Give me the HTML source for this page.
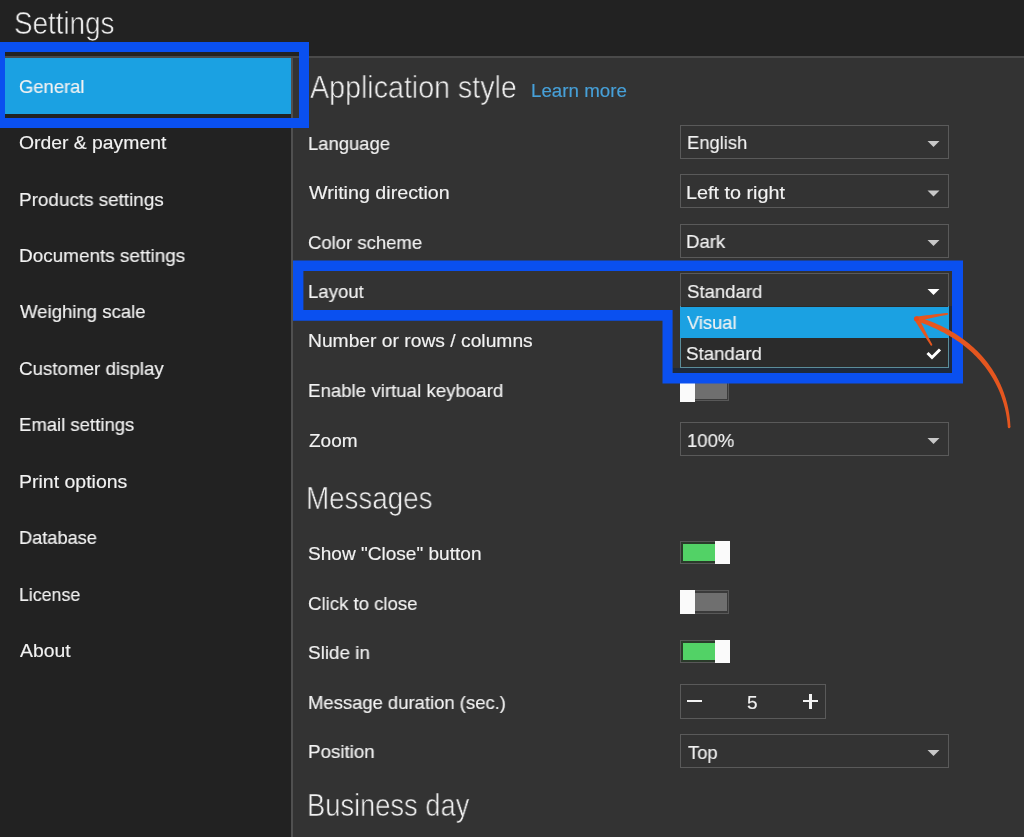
<!DOCTYPE html>
<html><head><meta charset="utf-8"><style>
html,body{margin:0;padding:0;}
body{width:1024px;height:837px;overflow:hidden;position:relative;background:#333333;font-family:"Liberation Sans", sans-serif;}
.a{position:absolute;}
.t{position:absolute;white-space:pre;line-height:1;transform-origin:0 0;font-family:"Liberation Sans", sans-serif;-webkit-text-stroke:0.15px currentColor;will-change:transform;}
</style></head><body>
<div class="a" style="left:0;top:0;width:1024px;height:56px;background:#222222"></div>
<div class="a" style="left:0;top:56px;width:1024px;height:2px;background:#4a4a4a"></div>
<div class="a" style="left:0;top:58px;width:291px;height:779px;background:#222222"></div>
<div class="a" style="left:291px;top:58px;width:2px;height:779px;background:#505050"></div>
<div class="a" style="left:0;top:58px;width:291px;height:56px;background:#1ba1e2"></div>
<!-- dropdowns -->
<div class="a" style="left:680px;top:125px;width:267px;height:32px;border:1px solid #5a5a5a"></div>
<div class="a" style="left:680px;top:174px;width:267px;height:32px;border:1px solid #5a5a5a"></div>
<div class="a" style="left:680px;top:224px;width:267px;height:32px;border:1px solid #5a5a5a"></div>
<div class="a" style="left:680px;top:273px;width:267px;height:33px;border:1px solid #5a5a5a;border-bottom:none"></div>
<div class="a" style="left:680px;top:422px;width:267px;height:32px;border:1px solid #5a5a5a"></div>
<div class="a" style="left:680px;top:734px;width:267px;height:32px;border:1px solid #5a5a5a"></div>
<svg class="a" style="left:0;top:0" width="1024" height="837">
<path d="M927.5 141 L939.5 141 L933.5 147 Z" fill="#c8c8c8"/>
<path d="M927.5 190.5 L939.5 190.5 L933.5 196.5 Z" fill="#c8c8c8"/>
<path d="M927.5 240 L939.5 240 L933.5 246 Z" fill="#c8c8c8"/>
<path d="M927.5 289 L939.5 289 L933.5 295 Z" fill="#ffffff"/>
<path d="M927.5 438 L939.5 438 L933.5 444 Z" fill="#c8c8c8"/>
<path d="M927.5 750 L939.5 750 L933.5 756 Z" fill="#c8c8c8"/>
</svg>
<!-- popup -->
<div class="a" style="left:949px;top:306px;width:3px;height:67px;background:#1e2a3c"></div>
<div class="a" style="left:673px;top:368px;width:279px;height:5px;background:#1e2a3c"></div>
<div class="a" style="left:680px;top:306px;width:269px;height:62px;background:#2b2b2b;border:1px solid #5b8d9a;border-top:none;box-sizing:border-box"></div>
<div class="a" style="left:680px;top:306.5px;width:269px;height:31.5px;background:#1ba1e2"></div>
<svg class="a" style="left:0;top:0" width="1024" height="837">
<path d="M927.5 353 L932 357.5 L940 349.5" stroke="#fff" stroke-width="3" fill="none"/>
</svg>
<!-- toggles -->
<div class="a" style="left:680px;top:378px;width:49px;height:23px;box-sizing:border-box;border:1px solid #585858;background:#3a3a3a"></div>
<div class="a" style="left:695px;top:380.5px;width:32px;height:18.5px;background:#6f6f6f"></div>
<div class="a" style="left:680px;top:378px;width:15px;height:23.5px;background:#fafafa"></div>

<div class="a" style="left:680px;top:540.5px;width:50px;height:23.5px;box-sizing:border-box;border:1px solid #585858;background:#2a3a2a"></div>
<div class="a" style="left:682.5px;top:543.5px;width:33px;height:17.5px;background:#52d266"></div>
<div class="a" style="left:715px;top:540.5px;width:15px;height:23.5px;background:#fafafa"></div>

<div class="a" style="left:680px;top:590.3px;width:49px;height:23.5px;box-sizing:border-box;border:1px solid #585858;background:#3a3a3a"></div>
<div class="a" style="left:695px;top:592.6px;width:32px;height:18.5px;background:#6f6f6f"></div>
<div class="a" style="left:680px;top:590.3px;width:15px;height:23.5px;background:#fafafa"></div>

<div class="a" style="left:680px;top:639.7px;width:50px;height:23.5px;box-sizing:border-box;border:1px solid #585858;background:#2a3a2a"></div>
<div class="a" style="left:682.5px;top:642.7px;width:33px;height:17.5px;background:#52d266"></div>
<div class="a" style="left:715px;top:639.7px;width:15px;height:23.5px;background:#fafafa"></div>
<!-- stepper -->
<div class="a" style="left:680px;top:684px;width:144px;height:32.5px;border:1px solid #5a5a5a"></div>
<div class="a" style="left:687px;top:699.5px;width:15px;height:2.2px;background:#f2f2f2"></div>
<div class="a" style="left:803px;top:700px;width:15px;height:2.3px;background:#f2f2f2"></div>
<div class="a" style="left:809.3px;top:693.5px;width:2.3px;height:15.5px;background:#f2f2f2"></div>

<div class='t' style='left:14.23px;top:8.20px;font-size:31.5px;color:#f0f0f0;transform:scaleX(0.8829);-webkit-text-stroke:0.6px #222;'>Settings</div>
<div class='t' style='left:19.03px;top:76.80px;font-size:19px;color:#f2f2f2;transform:scaleX(0.9692);'>General</div>
<div class='t' style='left:18.98px;top:133.22px;font-size:19px;color:#f2f2f2;transform:scaleX(1.0181);'>Order &amp; payment</div>
<div class='t' style='left:19.01px;top:189.64px;font-size:19px;color:#f2f2f2;transform:scaleX(0.9931);'>Products settings</div>
<div class='t' style='left:19.00px;top:246.06px;font-size:19px;color:#f2f2f2;transform:scaleX(0.9964);'>Documents settings</div>
<div class='t' style='left:20.00px;top:302.48px;font-size:19px;color:#f2f2f2;transform:scaleX(0.9766);'>Weighing scale</div>
<div class='t' style='left:19.01px;top:358.90px;font-size:19px;color:#f2f2f2;transform:scaleX(0.9863);'>Customer display</div>
<div class='t' style='left:19.03px;top:415.32px;font-size:19px;color:#f2f2f2;transform:scaleX(0.9744);'>Email settings</div>
<div class='t' style='left:18.97px;top:471.74px;font-size:19px;color:#f2f2f2;transform:scaleX(1.0260);'>Print options</div>
<div class='t' style='left:19.04px;top:528.16px;font-size:19px;color:#f2f2f2;transform:scaleX(0.9575);'>Database</div>
<div class='t' style='left:19.07px;top:584.58px;font-size:19px;color:#f2f2f2;transform:scaleX(0.9344);'>License</div>
<div class='t' style='left:20.00px;top:641.00px;font-size:19px;color:#f2f2f2;transform:scaleX(1.0200);'>About</div>
<div class='t' style='left:310.00px;top:71.60px;font-size:31px;color:#f0f0f0;transform:scaleX(0.9229);-webkit-text-stroke:0.6px #333;'>Application style</div>
<div class='t' style='left:530.66px;top:82.20px;font-size:18px;color:#47a0d8;transform:scaleX(1.0411);'>Learn more</div>
<div class='t' style='left:308.03px;top:133.60px;font-size:19px;color:#f2f2f2;transform:scaleX(0.9699);'>Language</div>
<div class='t' style='left:309.00px;top:182.80px;font-size:19px;color:#f2f2f2;transform:scaleX(1.0356);'>Writing direction</div>
<div class='t' style='left:308.03px;top:232.50px;font-size:19px;color:#f2f2f2;transform:scaleX(0.9733);'>Color scheme</div>
<div class='t' style='left:308.02px;top:282.00px;font-size:19px;color:#f2f2f2;transform:scaleX(0.9768);'>Layout</div>
<div class='t' style='left:307.99px;top:331.40px;font-size:19px;color:#f2f2f2;transform:scaleX(1.0136);'>Number or rows / columns</div>
<div class='t' style='left:308.02px;top:380.60px;font-size:19px;color:#f2f2f2;transform:scaleX(0.9832);'>Enable virtual keyboard</div>
<div class='t' style='left:309.00px;top:430.60px;font-size:19px;color:#f2f2f2;transform:scaleX(1.0000);'>Zoom</div>
<div class='t' style='left:306.31px;top:483.00px;font-size:31px;color:#f0f0f0;transform:scaleX(0.8956);-webkit-text-stroke:0.6px #333;'>Messages</div>
<div class='t' style='left:308.00px;top:544.20px;font-size:19px;color:#f2f2f2;transform:scaleX(1.0029);'>Show &quot;Close&quot; button</div>
<div class='t' style='left:308.02px;top:593.90px;font-size:19px;color:#f2f2f2;transform:scaleX(0.9791);'>Click to close</div>
<div class='t' style='left:308.01px;top:643.20px;font-size:19px;color:#f2f2f2;transform:scaleX(0.9933);'>Slide in</div>
<div class='t' style='left:308.03px;top:692.90px;font-size:19px;color:#f2f2f2;transform:scaleX(0.9708);'>Message duration (sec.)</div>
<div class='t' style='left:308.01px;top:742.40px;font-size:19px;color:#f2f2f2;transform:scaleX(0.9864);'>Position</div>
<div class='t' style='left:307.36px;top:789.60px;font-size:31px;color:#f0f0f0;transform:scaleX(0.8801);-webkit-text-stroke:0.6px #333;'>Business day</div>
<div class='t' style='left:687.03px;top:133.40px;font-size:19px;color:#f2f2f2;transform:scaleX(0.9667);'>English</div>
<div class='t' style='left:686.36px;top:183.10px;font-size:19px;color:#f2f2f2;transform:scaleX(1.0415);'>Left to right</div>
<div class='t' style='left:686.42px;top:232.30px;font-size:19px;color:#f2f2f2;transform:scaleX(0.9795);'>Dark</div>
<div class='t' style='left:686.72px;top:281.80px;font-size:19px;color:#f2f2f2;transform:scaleX(0.9773);'>Standard</div>
<div class='t' style='left:686.50px;top:313.30px;font-size:19px;color:#f2f2f2;transform:scaleX(0.9640);'>Visual</div>
<div class='t' style='left:685.52px;top:344.30px;font-size:19px;color:#f2f2f2;transform:scaleX(0.9840);'>Standard</div>
<div class='t' style='left:687.03px;top:430.60px;font-size:19px;color:#f2f2f2;transform:scaleX(0.9723);'>100%</div>
<div class='t' style='left:687.60px;top:743.00px;font-size:19px;color:#f2f2f2;transform:scaleX(0.9700);'>Top</div>
<div class='t' style='left:747.00px;top:693.00px;font-size:19px;color:#f2f2f2;transform:scaleX(1.0000);'>5</div>
<div class="a" style="left:-5px;top:42px;width:294px;height:66px;border:10px solid #0a50f0"></div>
<svg class="a" style="left:0;top:0" width="1024" height="837">
<path fill-rule="evenodd" fill="#0a50f0" d="M293 260.5 H963 V383.5 H662.5 V320.7 H293 Z M303.4 271 V310 H672.6 V373 H952 V271 Z"/>
<path d="M1010.40 426.93 L1010.33 425.08 L1010.22 423.20 L1010.08 421.29 L1009.91 419.36 L1009.69 417.41 L1009.44 415.44 L1009.15 413.45 L1008.82 411.44 L1008.45 409.42 L1008.03 407.38 L1007.57 405.33 L1007.07 403.27 L1006.52 401.19 L1005.93 399.11 L1005.29 397.01 L1004.60 394.91 L1003.87 392.80 L1003.08 390.69 L1002.25 388.57 L1001.36 386.45 L1000.43 384.33 L999.44 382.21 L998.39 380.09 L997.29 377.98 L996.14 375.86 L994.93 373.76 L993.66 371.66 L992.33 369.57 L990.94 367.48 L989.49 365.41 L987.97 363.36 L986.39 361.32 L984.75 359.30 L983.04 357.29 L981.27 355.30 L979.43 353.32 L977.53 351.37 L975.56 349.44 L973.52 347.54 L971.42 345.65 L969.24 343.80 L966.99 341.97 L964.67 340.16 L962.28 338.39 L959.82 336.65 L957.28 334.94 L954.67 333.26 L951.97 331.65 L949.19 330.07 L946.33 328.53 L943.40 327.03 L940.39 325.58 L937.31 324.16 L934.14 322.79 L930.89 321.46 L927.56 320.17 L924.15 318.94 L920.66 317.75 L917.11 316.61 L915.69 320.99 L919.19 322.14 L922.59 323.33 L925.89 324.57 L929.12 325.85 L932.26 327.17 L935.33 328.54 L938.31 329.94 L941.21 331.38 L944.03 332.86 L946.78 334.38 L949.45 335.93 L952.04 337.51 L954.58 339.10 L957.05 340.72 L959.44 342.37 L961.76 344.05 L964.01 345.76 L966.19 347.49 L968.31 349.25 L970.36 351.04 L972.34 352.85 L974.26 354.68 L976.11 356.53 L977.90 358.41 L979.63 360.30 L981.29 362.21 L982.90 364.13 L984.44 366.07 L985.93 368.02 L987.36 369.99 L988.74 371.96 L990.07 373.94 L991.34 375.93 L992.55 377.93 L993.72 379.94 L994.83 381.95 L995.88 383.97 L996.89 385.99 L997.85 388.02 L998.76 390.04 L999.62 392.07 L1000.43 394.09 L1001.19 396.11 L1001.91 398.13 L1002.59 400.14 L1003.22 402.15 L1003.80 404.14 L1004.35 406.13 L1004.85 408.11 L1005.31 410.08 L1005.74 412.03 L1006.12 413.97 L1006.47 415.90 L1006.78 417.81 L1007.06 419.70 L1007.29 421.57 L1007.50 423.42 L1007.67 425.25 L1007.80 427.07 Z" fill="#e5561f"/><path d="M916.77 321.07 L920.17 320.36 L923.56 319.65 L926.96 318.94 L930.36 318.23 L933.76 317.52 L937.15 316.82 L940.55 316.11 L943.95 315.40 L947.34 314.69 L947.06 312.91 L943.61 313.31 L940.16 313.72 L936.71 314.12 L933.27 314.52 L929.82 314.92 L926.37 315.32 L922.93 315.73 L919.48 316.13 L916.03 316.53 Z" fill="#e5561f"/><path d="M914.41 319.95 L916.21 322.76 L918.01 325.57 L919.81 328.38 L921.61 331.19 L923.41 334.01 L925.22 336.82 L927.02 339.63 L928.82 342.44 L930.62 345.25 L932.18 344.35 L930.65 341.38 L929.12 338.42 L927.58 335.45 L926.05 332.48 L924.52 329.52 L922.99 326.55 L921.46 323.58 L919.92 320.62 L918.39 317.65 Z" fill="#e5561f"/><circle cx="1009.1" cy="427" r="1.3" fill="#e5561f"/><circle cx="947.2" cy="313.8" r="0.9" fill="#e5561f"/><circle cx="931.4" cy="344.8" r="0.9" fill="#e5561f"/><circle cx="916.4" cy="318.8" r="2.5" fill="#ea4a18"/>
</svg>

</body></html>
